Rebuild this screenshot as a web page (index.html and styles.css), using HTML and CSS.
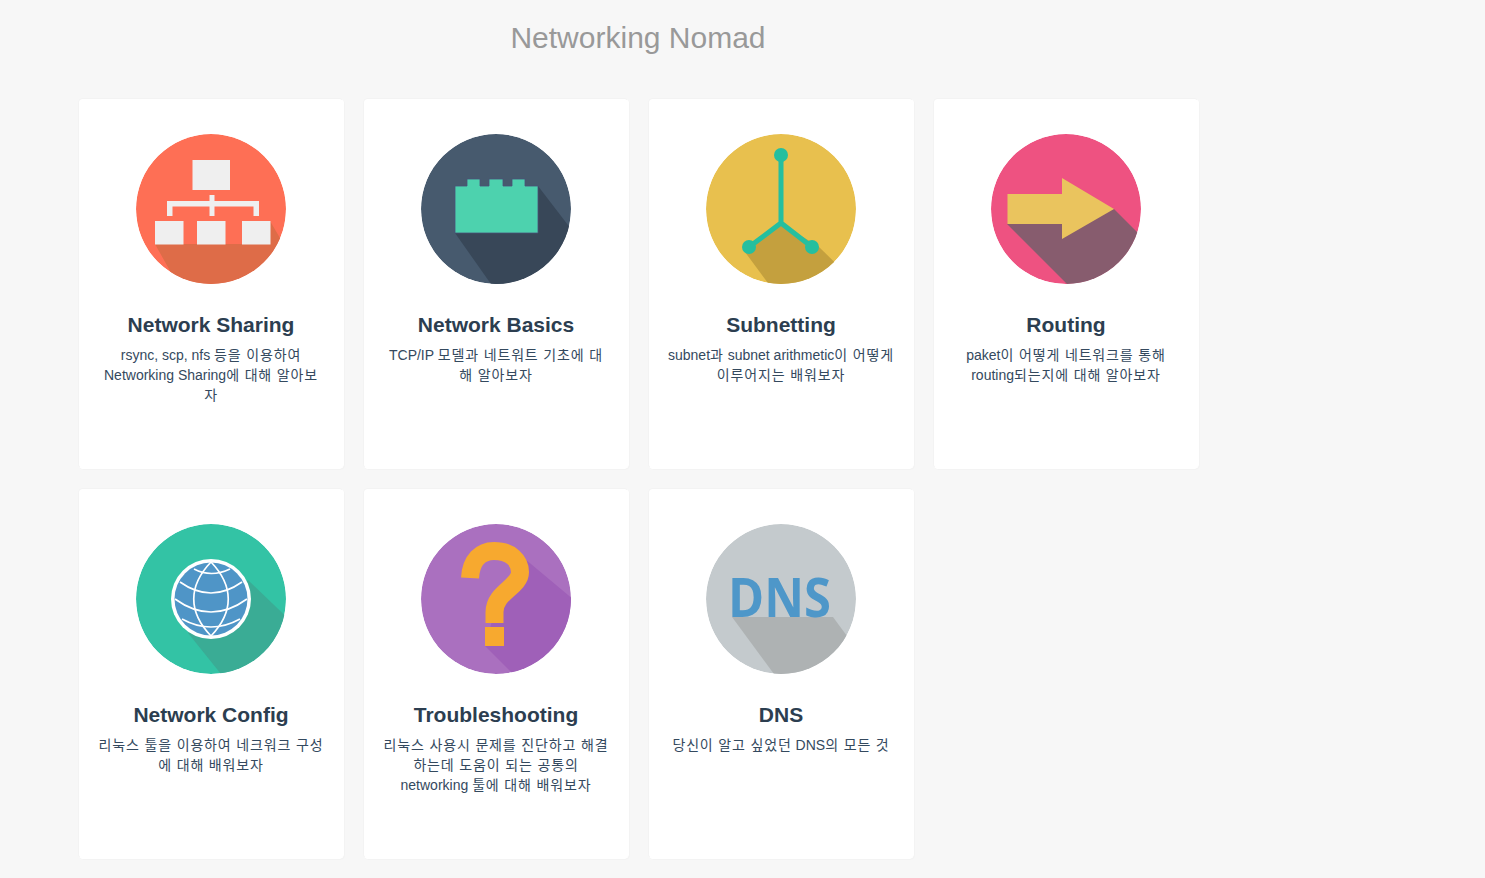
FILE: index.html
```html
<!DOCTYPE html>
<html lang="ko">
<head>
    <meta charset="UTF-8">
    <meta name="viewport" content="width=device-width, initial-scale=1.0">
    <title>Networking Nomad</title>
    <link rel="stylesheet" href="styles.css">
</head>
<body>
    <div class="container">
        <h1 class="site-title">Networking Nomad</h1>
        <div class="card-grid">

            <div class="card">
                <svg class="icon" viewBox="0 0 150 150">
                    <circle cx="75" cy="75" r="75" fill="#fe6f55"/>
                    <polygon points="19,110 134,110 134,87 177,160 47,160" fill="#de6c48"/>
                    <g fill="#efefef">
                        <rect x="56.500" y="26" width="37.500" height="30"/>
                        <rect x="19" y="87" width="28.500" height="23.500"/>
                        <rect x="61" y="87" width="28.500" height="23.500"/>
                        <rect x="106" y="87" width="28.500" height="23.500"/>
                        <path d="M31 67h92v15h-5.500v-9.500h-39V82h-5V72.500H36.500V82H31z"/>
                        <rect x="73.500" y="61" width="5" height="8"/>
                    </g>
                </svg>
                <h3>Network Sharing</h3>
                <p>rsync, scp, nfs <span class="ko">등을 이용하여</span> Networking Sharing<span class="ko">에 대해 알아보자</span></p>
            </div>

            <div class="card">
                <svg class="icon" viewBox="0 0 150 150">
                    <circle cx="75" cy="75" r="75" fill="#475a6e"/>
                    <polygon points="34,99 117,52 160,108 160,160 77,160" fill="#384758"/>
                    <path d="M34 52h12v-7h13v7h9v-7h14v7h9v-7h13v7h13v47H34z" fill="#4dd2ae" stroke="#4b5078" stroke-width="0.8"/>
                </svg>
                <h3>Network Basics</h3>
                <p>TCP/IP <span class="ko">모델과 네트워트 기초에 대해 알아보자</span></p>
            </div>

            <div class="card">
                <svg class="icon" viewBox="0 0 150 150">
                    <circle cx="75" cy="75" r="75" fill="#e8c04e"/>
                    <polygon points="75,90 112,112 150,149 70,160 39,118" fill="#c4a03e"/>
                    <path d="M75 21V89M43 113L75 89L106 113" fill="none" stroke="#25bf9f" stroke-width="5"/>
                    <g fill="#25bf9f">
                        <circle cx="75" cy="21" r="7"/>
                        <circle cx="43" cy="113" r="7"/>
                        <circle cx="106" cy="113" r="7"/>
                    </g>
                </svg>
                <h3>Subnetting</h3>
                <p>subnet<span class="ko">과</span> subnet arithmetic<span class="ko">이 어떻게 이루어지는 배워보자</span></p>
            </div>

            <div class="card">
                <svg class="icon" viewBox="0 0 150 150">
                    <circle cx="75" cy="75" r="75" fill="#ee5281"/>
                    <polygon points="16,90 123,75 170,122 170,165 91,165" fill="#875c6e"/>
                    <polygon points="16.500,60 71,60 71,44 123,75 71,105 71,90 16.500,90" fill="#eac45e"/>
                </svg>
                <h3>Routing</h3>
                <p>paket<span class="ko">이 어떻게 네트워크를 통해</span> routing<span class="ko">되는지에 대해 알아보자</span></p>
            </div>

            <div class="card">
                <svg class="icon" viewBox="0 0 150 150">
                    <circle cx="75" cy="75" r="75" fill="#33c3a5"/>
                    <polygon points="52,109 112,56 160,102 160,165 97,165" fill="#3aac95"/>
                    <circle cx="75" cy="75" r="40" fill="#fff"/>
                    <circle cx="75" cy="75" r="36.500" fill="#4f95c7"/>
                    <g fill="none" stroke="#fff" stroke-width="1.700">
                        <path d="M75 38C52 62 52 88 75 112C98 88 98 62 75 38Z"/>
                        <path d="M58 45Q75 54 94 45M44 58Q75 80 106 58M39 75Q75 101 111 75M46 95Q75 111 104 95"/>
                    </g>
                </svg>
                <h3>Network Config</h3>
                <p><span class="ko">리눅스 툴을 이용하여 네크워크 구성에 대해 배워보자</span></p>
            </div>

            <div class="card">
                <svg class="icon" viewBox="0 0 150 150">
                    <circle cx="75" cy="75" r="75" fill="#aa70bf"/>
                    <polygon points="104,35 160,82 160,165 107,165 64,122 73,90" fill="#9f60b8"/>
                    <path d="M49 54C50 36 60 27 73 27C90 27 99 37 99 48C99 63 73.500 68 73.500 88V99" fill="none" stroke="#f7a92f" stroke-width="18"/>
                    <rect x="64" y="103" width="19" height="19" fill="#f7a92f"/>
                </svg>
                <h3>Troubleshooting</h3>
                <p><span class="ko">리눅스 사용시 문제를 진단하고 해결하는데 도움이 되는 공통의</span> networking <span class="ko">툴에 대해 배워보자</span></p>
            </div>

            <div class="card">
                <svg class="icon" viewBox="0 0 150 150">
                    <circle cx="75" cy="75" r="75" fill="#c4cacd"/>
                    <polygon points="26,93 127,93 160,138 160,165 79,165" fill="#aeb2b3"/>
                    <text class="dns-mark" x="22" y="93" textLength="103" lengthAdjust="spacingAndGlyphs">DNS</text>
                </svg>
                <h3>DNS</h3>
                <p><span class="ko">당신이 알고 싶었던</span> DNS<span class="ko">의 모든 것</span></p>
            </div>

        </div>
    </div>
</body>
</html>
```
FILE: styles.css
```css
html, body {
    margin: 0;
    padding: 0;
}
body {
    background-color: #f7f7f7;
    font-family: "Liberation Sans", Arial, "Noto Sans CJK KR", sans-serif;
}
.container {
    width: 1276px;
}
.site-title {
    margin: 0;
    padding-top: 21px;
    height: 78px;
    box-sizing: border-box;
    text-align: center;
    font-size: 30px;
    line-height: 34px;
    font-weight: 400;
    color: #999;
}
.card-grid {
    display: grid;
    grid-template-columns: repeat(4, 266px);
    grid-auto-rows: 371px;
    gap: 19px;
    padding: 20px 0 19px 78px;
}
.card {
    box-sizing: border-box;
    padding: 35px 19px 0;
    background-color: #fff;
    border: 1px solid #fff;
    border-top-color: #f3f3f3;
    border-left-color: #f3f3f3;
    border-radius: 5px;
    box-shadow: 1px 1px 0 #f3f3f3;
    text-align: center;
}
.icon {
    display: block;
    width: 150px;
    height: 150px;
    margin: 0 auto;
    border-radius: 50%;
}
.card h3 {
    margin: 28px 0 7px;
    font-size: 21px;
    line-height: 26px;
    font-weight: 700;
    color: #2c3e50;
}
.card p {
    margin: 0;
    font-size: 14px;
    line-height: 20px;
    color: #34495e;
}
.ko {
    letter-spacing: 0.85px;
}
.dns-mark {
    font-family: "Open Sans", sans-serif;
    font-size: 54px;
    font-weight: 700;
    fill: #4e97c9;
}
```
